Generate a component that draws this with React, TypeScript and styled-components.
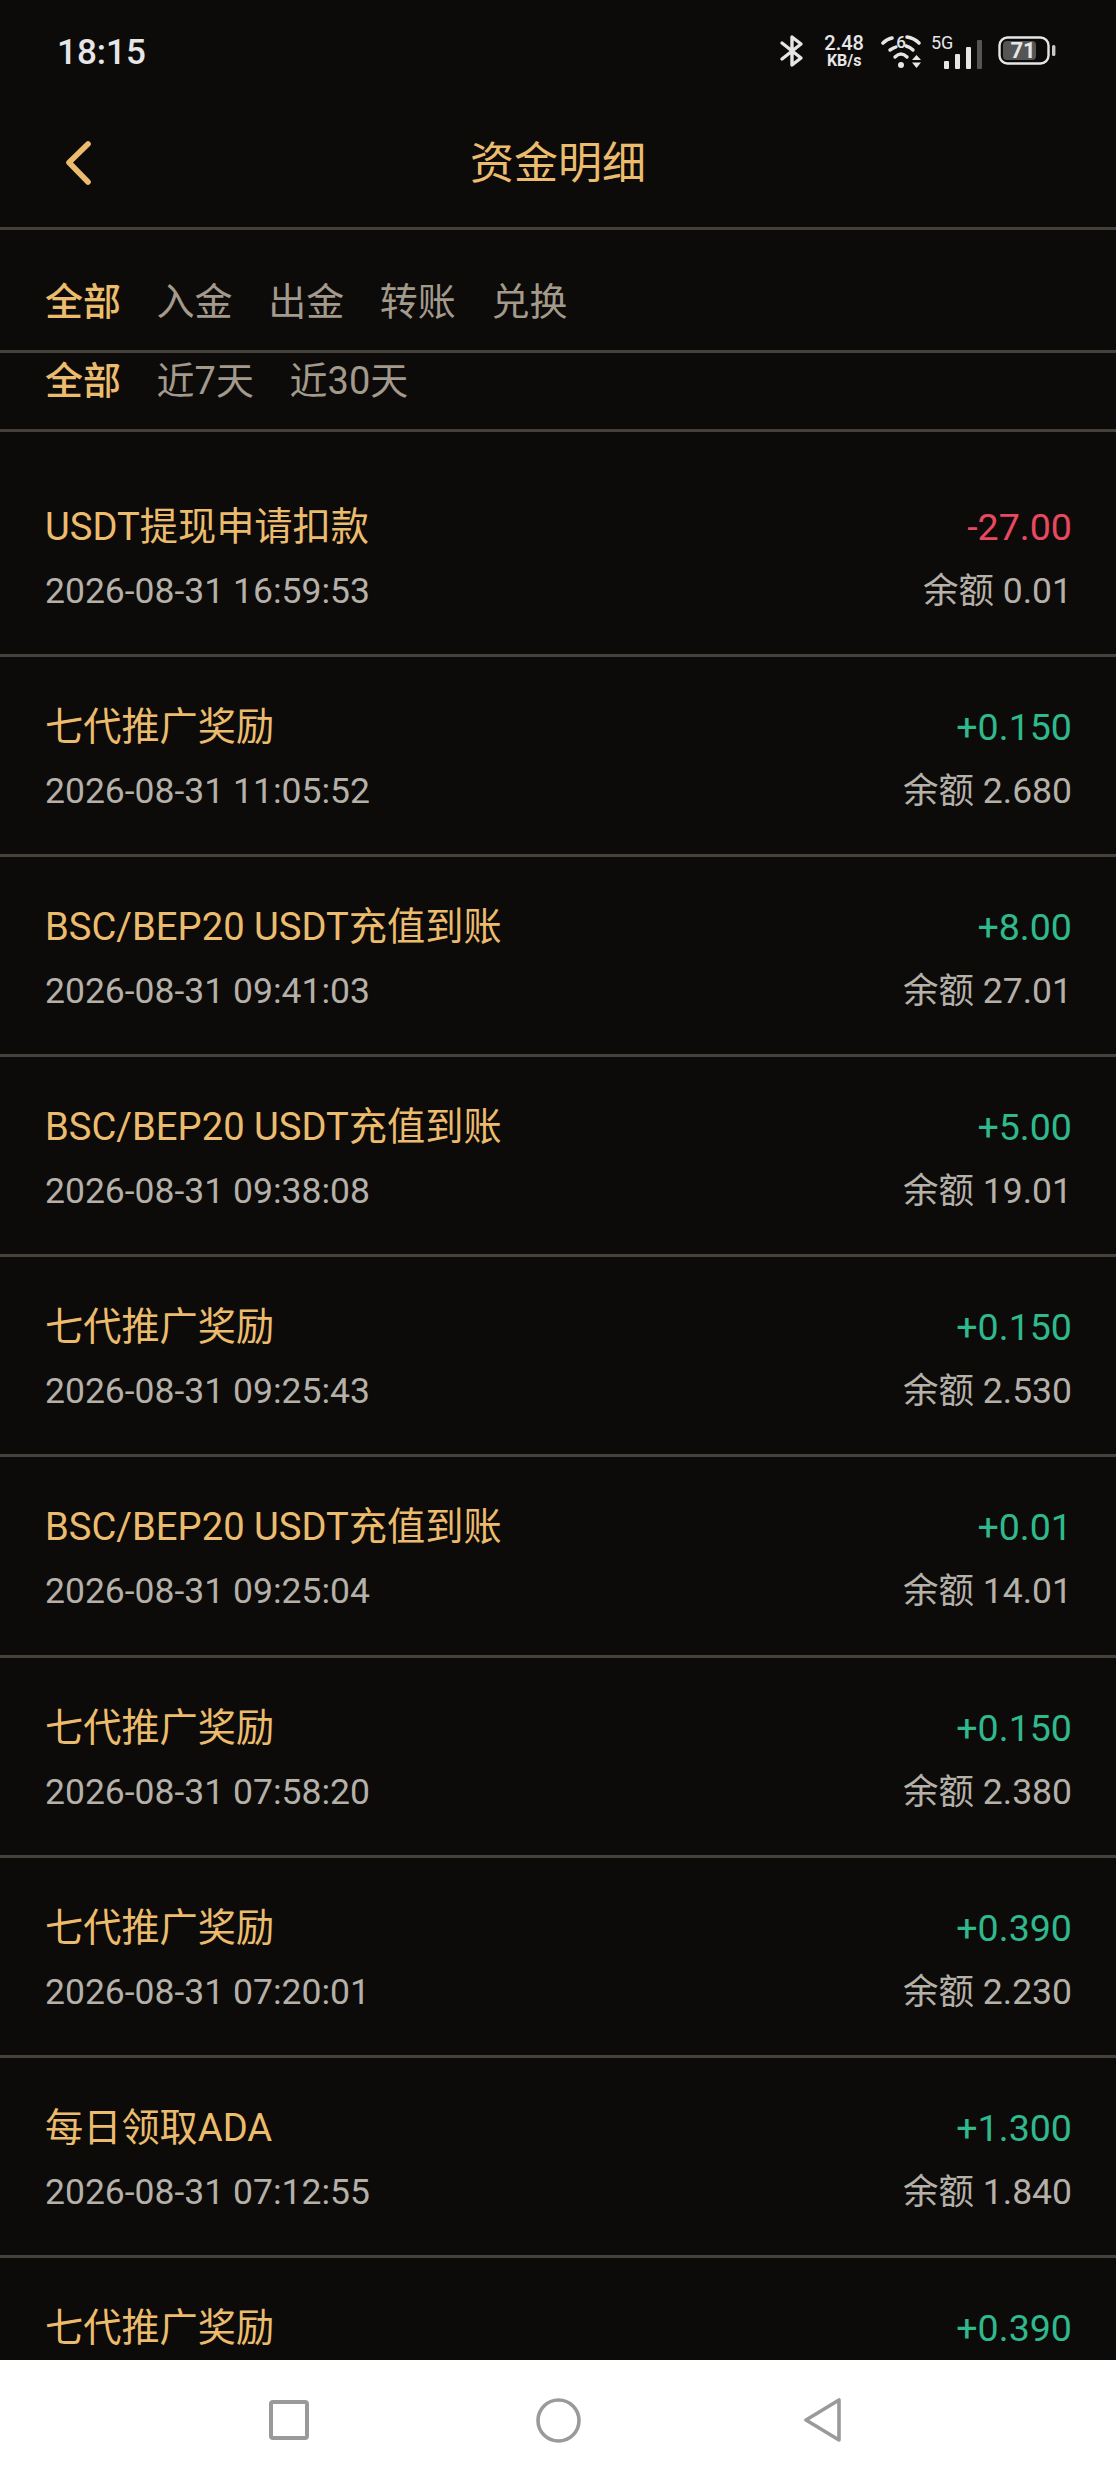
import styled, { createGlobalStyle } from 'styled-components';

const GlobalStyle = createGlobalStyle`
  html, body {
    margin: 0;
    padding: 0;
    background: #0c0b0a;
  }
`;

const FONT = `Roboto, "Noto Sans CJK SC", sans-serif`;
const GOLD = '#ecbc6e';
const LINE = '#45403a';

// whole phone screen
const Screen = styled.div`
  width: 1116px;
  height: 2480px;
  display: flex;
  flex-direction: column;
  overflow: hidden;
  background: #0c0b0a;
  font-family: ${FONT};
`;

// android status bar
const StatusBar = styled.div`
  height: 100px;
  flex: none;
  display: flex;
  align-items: center;
  justify-content: space-between;
  padding: 0 60px 0 57px;
  box-sizing: border-box;
`;

const Time = styled.span`
  color: #e6e6e6;
  font-size: 35px;
  font-weight: 500;
  margin-top: 4px;
`;

const StatusIcons = styled.div`
  display: flex;
  align-items: center;
  margin-top: 2px;
`;

const Speed = styled.div`
  display: flex;
  flex-direction: column;
  align-items: center;
  color: #e6e6e6;
  font-weight: 500;
  margin: 0 17px 0 19px;
  span:first-child {
    font-size: 20px;
    line-height: 19px;
  }
  span:last-child {
    font-size: 16px;
    line-height: 15px;
    font-weight: 700;
  }
`;

// page title bar
const Header = styled.div`
  height: 130px;
  flex: none;
  box-sizing: border-box;
  position: relative;
  display: flex;
  align-items: center;
  justify-content: center;
  border-bottom: 3px solid ${LINE};
`;

const BackIcon = styled.svg`
  position: absolute;
  left: 65px;
  top: 41px;
`;

const Title = styled.h1`
  margin: 0;
  color: ${GOLD};
  font-size: 44px;
  font-weight: 400;
  line-height: 60px;
  margin-top: 1px;
`;

const TabRow = styled.div<{ $height: number; $top: number; $bottom: number }>`
  height: ${p => p.$height}px;
  flex: none;
  box-sizing: border-box;
  display: flex;
  align-items: center;
  gap: 35.6px;
  padding: ${p => p.$top}px 0 ${p => p.$bottom}px 45px;
  border-bottom: 3px solid ${LINE};
`;

const Tab = styled.span<{ $active?: boolean }>`
  font-size: 38px;
  line-height: 50px;
  color: ${p => (p.$active ? GOLD : '#a39a8c')};
  font-weight: ${p => (p.$active ? 500 : 400)};
`;

const List = styled.div`
  flex: 1;
  min-height: 0;
  padding-top: 25px;
  overflow: hidden;
`;

const Row = styled.div`
  height: 200.1px;
  box-sizing: border-box;
  padding: 38px 44px 0 45px;
  display: grid;
  grid-template-columns: 1fr auto;
  grid-template-rows: 64px 64px;
  align-content: start;
  align-items: center;
  line-height: 64px;
  border-bottom: 3px solid ${LINE};
`;

const RowTitle = styled.div`
  color: ${GOLD};
  font-size: 38.2px;
`;

const Amount = styled.div<{ $negative: boolean }>`
  color: ${p => (p.$negative ? '#e9495f' : '#2fb98c')};
  font-size: 37.6px;
  text-align: right;
`;

const RowTime = styled.div`
  color: #b5b1a9;
  font-size: 35.5px;
`;

const Balance = styled.div`
  color: #b5b1a9;
  font-size: 35.5px;
  text-align: right;
`;

// white android nav bar
const NavBar = styled.div`
  height: 120px;
  flex: none;
  background: #fff;
  display: flex;
  align-items: center;
  padding-left: 268px;
`;

const NavIcon = styled.svg<{ $gap: number }>`
  flex: none;
  margin-right: ${p => p.$gap}px;
`;

const rows = [
  { title: 'USDT提现申请扣款', time: '2026-08-31 16:59:53', amount: '-27.00', balance: '0.01' },
  { title: '七代推广奖励', time: '2026-08-31 11:05:52', amount: '+0.150', balance: '2.680' },
  { title: 'BSC/BEP20 USDT充值到账', time: '2026-08-31 09:41:03', amount: '+8.00', balance: '27.01' },
  { title: 'BSC/BEP20 USDT充值到账', time: '2026-08-31 09:38:08', amount: '+5.00', balance: '19.01' },
  { title: '七代推广奖励', time: '2026-08-31 09:25:43', amount: '+0.150', balance: '2.530' },
  { title: 'BSC/BEP20 USDT充值到账', time: '2026-08-31 09:25:04', amount: '+0.01', balance: '14.01' },
  { title: '七代推广奖励', time: '2026-08-31 07:58:20', amount: '+0.150', balance: '2.380' },
  { title: '七代推广奖励', time: '2026-08-31 07:20:01', amount: '+0.390', balance: '2.230' },
  { title: '每日领取ADA', time: '2026-08-31 07:12:55', amount: '+1.300', balance: '1.840' },
  { title: '七代推广奖励', time: '', amount: '+0.390', balance: '' },
];

function App() {
  return (
    <Screen>
      <GlobalStyle />
      <StatusBar>
        <Time>18:15</Time>
        <StatusIcons>
          {/* bluetooth */}
          <svg width="26" height="34" viewBox="0 0 26 34" fill="none" stroke="#e6e6e6" strokeWidth="3.4" strokeLinejoin="round" strokeLinecap="round">
            <path d="M3 9 L22 24 L13 31 V3 L22 10 L3 25" />
          </svg>
          <Speed>
            <span>2.48</span>
            <span>KB/s</span>
          </Speed>
          {/* wifi 6 */}
          <svg width="42" height="36" viewBox="0 0 42 36" fill="none" stroke="#e6e6e6" strokeLinecap="round">
            <path d="M2 10 Q6 6 11 5" strokeWidth="3.6" />
            <path d="M26 4 Q33 5 38 10" strokeWidth="3.6" />
            <path d="M9 17 Q12 15 15 14" strokeWidth="3.4" />
            <path d="M25 13 Q29 14 32 17" strokeWidth="3.4" />
            <path d="M14 24 Q20 18 26 24" strokeWidth="3.4" />
            <circle cx="20" cy="32" r="3" fill="#e6e6e6" stroke="none" />
            <path d="M35.5 22 L40 27 H31 Z M31 29.5 H40 L35.5 35 Z" fill="#e6e6e6" stroke="none" />
            <text x="20" y="15" fill="#e6e6e6" stroke="none" fontFamily="Roboto" fontSize="17" fontWeight="500" textAnchor="middle">6</text>
          </svg>
          {/* cell signal */}
          <svg width="54" height="38" viewBox="0 -4 54 38" style={{ marginLeft: 7 }}>
            <text x="1" y="13" fill="#e6e6e6" fontFamily="Roboto" fontSize="18" fontWeight="400">5G</text>
            <rect x="14" y="25" width="5" height="8" rx="1" fill="#e6e6e6" />
            <rect x="25" y="18" width="5" height="15" rx="1" fill="#e6e6e6" />
            <rect x="36" y="11" width="5" height="22" rx="1" fill="#e6e6e6" />
            <rect x="47" y="4" width="5" height="29" rx="1" fill="#555" />
          </svg>
          {/* battery */}
          <svg width="58" height="30" viewBox="0 0 58 30" style={{ marginLeft: 14 }}>
            <rect x="1.5" y="1.5" width="49" height="26" rx="8" fill="none" stroke="#e6e6e6" strokeWidth="2.4" />
            <rect x="5" y="5" width="33" height="19" rx="4" fill="#555" />
            <rect x="54" y="9" width="3.4" height="11" rx="1.5" fill="#c9c9c9" />
            <text x="25" y="22" fill="#e6e6e6" fontFamily="Roboto" fontSize="22" fontWeight="700" textAnchor="middle">71</text>
          </svg>
        </StatusIcons>
      </StatusBar>
      <Header>
        <BackIcon width="28" height="44" viewBox="0 0 28 44" fill="none" stroke={GOLD} strokeWidth="5.6" strokeLinecap="round" strokeLinejoin="round">
          <path d="M23 3 L4 21.5 L23 41" />
        </BackIcon>
        <Title>资金明细</Title>
      </Header>
      <TabRow $height={123} $top={24} $bottom={0}>
        <Tab $active>全部</Tab>
        <Tab>入金</Tab>
        <Tab>出金</Tab>
        <Tab>转账</Tab>
        <Tab>兑换</Tab>
      </TabRow>
      <TabRow $height={79} $top={0} $bottom={21}>
        <Tab $active>全部</Tab>
        <Tab>近7天</Tab>
        <Tab>近30天</Tab>
      </TabRow>
      <List>
        {rows.map((row, i) => (
          <Row key={i}>
            <RowTitle>{row.title}</RowTitle>
            <Amount $negative={row.amount.startsWith('-')}>{row.amount}</Amount>
            <RowTime>{row.time}</RowTime>
            <Balance>{row.balance && `余额 ${row.balance}`}</Balance>
          </Row>
        ))}
      </List>
      <NavBar>
        <NavIcon $gap={226} width="42" height="42" viewBox="0 0 42 42" fill="none" stroke="#9a9a9a" strokeWidth="4">
          <rect x="3" y="3" width="36" height="36" rx="2" />
        </NavIcon>
        <NavIcon $gap={223} width="45" height="45" viewBox="0 0 45 45" fill="none" stroke="#9a9a9a" strokeWidth="3.6">
          <circle cx="22.5" cy="22.5" r="20.5" />
        </NavIcon>
        <NavIcon $gap={0} width="38" height="46" viewBox="0 0 38 46" fill="none" stroke="#9a9a9a" strokeWidth="3.6" strokeLinejoin="round">
          <path d="M35 3 V43 L2 23 Z" />
        </NavIcon>
      </NavBar>
    </Screen>
  );
}

export default App;
